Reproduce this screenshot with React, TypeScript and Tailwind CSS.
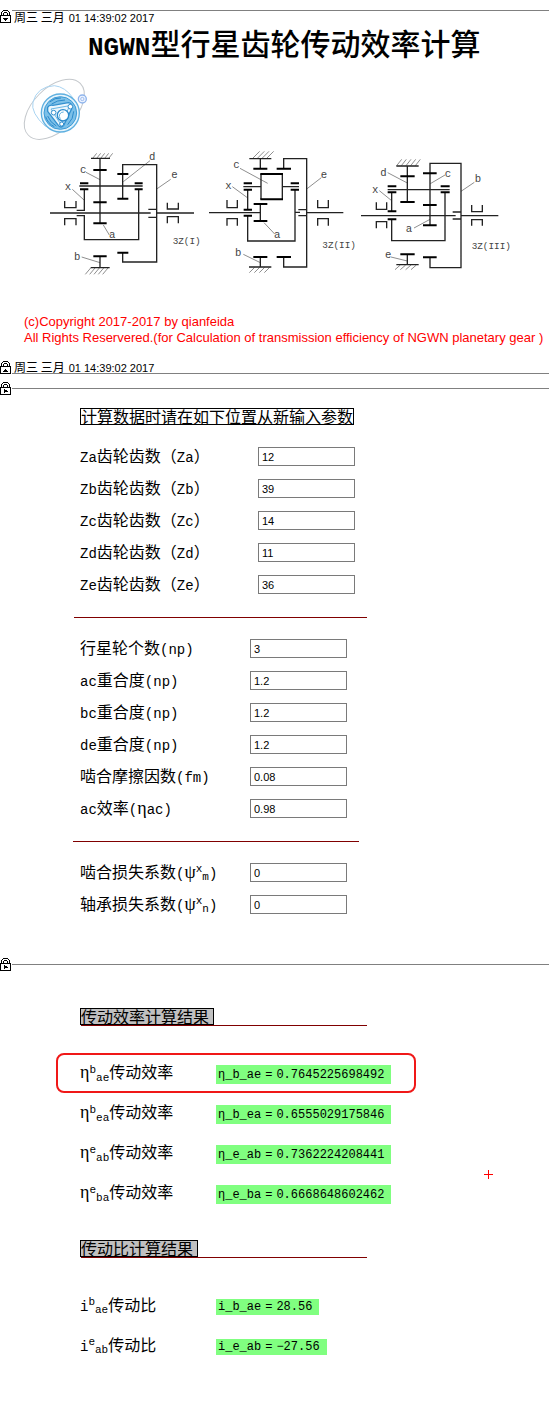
import { useState } from "react"
import type { ReactNode } from "react"

type Field = {
  id: string
  label: ReactNode
  value: string
}

type Result = {
  name: string
  symbol: string
  sup: string
  sub: string
  value: string
}

const CJK = "font-['Noto_Sans_CJK_SC',sans-serif]"
const MONO = "font-['Liberation_Mono','Noto_Sans_CJK_SC',monospace]"
const SANS = "font-['Liberation_Sans','Noto_Sans_CJK_SC',sans-serif]"

// Chinese at 16px, Latin runs in a slightly smaller monospace
function Mixed({ text }: { text: string }) {
  return (
    <>
      {text.split(/([\x20-\x7e]+)/).map((part, i) =>
        i % 2 === 1 ? (
          <span key={i} className={`${MONO} text-[14px]`}>
            {part}
          </span>
        ) : (
          part
        ),
      )}
    </>
  )
}

function Script({ sup, sub }: { sup: string; sub: string }) {
  return (
    <span className={MONO}>
      <sup className="text-[11px]">{sup}</sup>
      <sub className="text-[11px]">{sub}</sub>
    </span>
  )
}

function Greek({ children }: { children: ReactNode }) {
  return (
    <span className="font-['Liberation_Serif',serif] text-[18px]">
      {children}
    </span>
  )
}

const gearFields: Field[] = [
  { id: "za", label: <Mixed text="Za齿轮齿数（Za）" />, value: "12" },
  { id: "zb", label: <Mixed text="Zb齿轮齿数（Zb）" />, value: "39" },
  { id: "zc", label: <Mixed text="Zc齿轮齿数（Zc）" />, value: "14" },
  { id: "zd", label: <Mixed text="Zd齿轮齿数（Zd）" />, value: "11" },
  { id: "ze", label: <Mixed text="Ze齿轮齿数（Ze）" />, value: "36" },
]

const meshFields: Field[] = [
  { id: "np", label: <Mixed text="行星轮个数(np)" />, value: "3" },
  { id: "ac", label: <Mixed text="ac重合度(np)" />, value: "1.2" },
  { id: "bc", label: <Mixed text="bc重合度(np)" />, value: "1.2" },
  { id: "de", label: <Mixed text="de重合度(np)" />, value: "1.2" },
  { id: "fm", label: <Mixed text="啮合摩擦因数(fm)" />, value: "0.08" },
  {
    id: "eta-ac",
    label: (
      <>
        <Mixed text="ac效率(" />
        <Greek>η</Greek>
        <Mixed text="ac)" />
      </>
    ),
    value: "0.98",
  },
]

const lossFields: Field[] = [
  {
    id: "psi-m",
    label: (
      <>
        <Mixed text="啮合损失系数(" />
        <Greek>ψ</Greek>
        <Script sup="x" sub="m" />
        <Mixed text=")" />
      </>
    ),
    value: "0",
  },
  {
    id: "psi-n",
    label: (
      <>
        <Mixed text="轴承损失系数(" />
        <Greek>ψ</Greek>
        <Script sup="x" sub="n" />
        <Mixed text=")" />
      </>
    ),
    value: "0",
  },
]

const efficiencies: Result[] = [
  { name: "η_b_ae", symbol: "η", sup: "b", sub: "ae", value: "0.7645225698492" },
  { name: "η_b_ea", symbol: "η", sup: "b", sub: "ea", value: "0.6555029175846" },
  { name: "η_e_ab", symbol: "η", sup: "e", sub: "ab", value: "0.7362224208441" },
  { name: "η_e_ba", symbol: "η", sup: "e", sub: "ba", value: "0.6668648602462" },
]

const ratios: Result[] = [
  { name: "i_b_ae", symbol: "i", sup: "b", sub: "ae", value: "28.56" },
  { name: "i_e_ab", symbol: "i", sup: "e", sub: "ab", value: "−27.56" },
]

const lockArrows = {
  down: "M3 8h5v1h-1v1h-1v1h-1v-1h-1v-1h-1z",
  up: "M3 11h5v-1h-1v-1h-1v-1h-1v1h-1v1h-1z",
  right: "M4 7h1v1h2v1h1v1h-1v0h-2v1h-1z",
}

function Lock({ arrow }: { arrow: keyof typeof lockArrows }) {
  return (
    <svg
      viewBox="0 0 12 13"
      className="h-[13px] w-3 shrink-0"
      shapeRendering="crispEdges"
    >
      <path
        d="M3 0h5v1h-5zM2 1h1v1h-1zM8 1h1v1h-1zM1 2h1v3h-1zM9 2h1v3h-1zM4 2h3v1h-3zM3 3h1v2h-1zM7 3h1v2h-1z"
        fill="#000"
      />
      <rect x="0.500" y="5.500" width="10" height="7" fill="#fff" stroke="#000" />
      <path d={lockArrows[arrow]} fill="#000" />
    </svg>
  )
}

function DateText() {
  return (
    <time
      dateTime="2017-03-01T14:39:02"
      className={`${SANS} flex items-baseline gap-1 pl-0.5 text-[11px] leading-3 whitespace-pre`}
    >
      <span className={`${CJK} text-[12px]`}>周三 三月</span>
      01 14:39:02 2017
    </time>
  )
}

function Divider() {
  return (
    <div className="flex h-[13px] items-center">
      <Lock arrow="right" />
      <div className="h-px flex-1 bg-[#808080]" />
    </div>
  )
}

function Logo() {
  return (
    <svg viewBox="0 0 240 225" className="h-[75px] w-20" fill="none">
      <ellipse
        cx="118"
        cy="118"
        rx="110"
        ry="64"
        transform="rotate(-45 118 118)"
        stroke="#c4c8cc"
        strokeWidth="3"
      />
      <path
        d="M92 170Q46 128 54 96Q66 50 118 47Q150 50 174 84"
        stroke="#a9d4f2"
        strokeWidth="3"
      />
      <circle cx="136" cy="129" r="57" fill="#e6f4fc" stroke="#5fb0e0" strokeWidth="4" />
      <circle cx="136" cy="129" r="49" fill="#7cc0e8" stroke="#3d9bd6" strokeWidth="3" />
      <path
        d="M98 112Q102 104 114 106L160 98Q174 100 170 116L146 166Q138 176 130 166L98 124Z"
        fill="#eaf6fd"
        stroke="#3390cf"
        strokeWidth="4"
      />
      <path
        d="M108 117L158 108Q163 108 160 116L140 158H134Z"
        stroke="#6ab7e4"
        strokeWidth="3"
      />
      <circle cx="144" cy="136" r="17" fill="#fff" stroke="#2c8acb" strokeWidth="4" />
      <path d="M136 146A12 12 0 0 1 146 126" stroke="#5fb0e0" strokeWidth="3" />
      <circle cx="116" cy="128" r="7" fill="#fff" stroke="#3390cf" strokeWidth="3" />
      <circle cx="166" cy="110" r="7" fill="#fff" stroke="#3390cf" strokeWidth="3" />
      <circle cx="140" cy="162" r="6" fill="#fff" stroke="#3390cf" strokeWidth="3" />
      <path
        d="M104 96Q120 82 138 84M110 102Q126 90 150 90M92 140Q98 160 118 170M98 138Q106 158 124 168M176 124Q176 146 158 164"
        stroke="#2c8acb"
        strokeWidth="3"
      />
      <circle cx="202" cy="87" r="12" fill="#eef4ff" stroke="#8fb4ec" strokeWidth="4" />
      <circle cx="202" cy="87" r="5" stroke="#7aa3e6" strokeWidth="2" />
    </svg>
  )
}

type SchemeProps = {
  className: string
  viewBox: string
  lines: string
  bars: string
  thin: string
  labels: [number, number, string][]
  title: [number, number, string]
}

function Scheme({ className, viewBox, lines, bars, thin, labels, title }: SchemeProps) {
  return (
    <svg viewBox={viewBox} className={`${className} h-32 shrink-0`} fill="none">
      <path d={thin} stroke="#555" strokeWidth="2" />
      <path d={lines} stroke="#222" strokeWidth="4" />
      <path d={bars} stroke="#000" strokeWidth="6" />
      <g className={MONO} fill="#444">
        {labels.map(([x, y, text]) => (
          <text key={text} x={x} y={y} fontSize="32">
            {text}
          </text>
        ))}
        <text x={title[0]} y={title[1]} fontSize="28">
          {title[2]}
        </text>
      </g>
    </svg>
  )
}

const schemes: SchemeProps[] = [
  {
    className: "w-[152px]",
    viewBox: "30 30 456 384",
    lines:
      "M30 219H332M350 219H462M153 55H210M180 55V250M118 138H308M248 176V74H350V366H248V338M325 208H350M325 232H350M110 211H133V148M110 227H133V299H296V148M74 183V203H108V183M74 256V236H108V256M382 188V207H415V188M382 250V230H415V250M180 349V383M152 383H209",
    bars:
      "M160 90H200M160 187H200M160 250H200M120 130H145M120 148H145M284 130H308M284 148H308M232 102H265M232 176H265M160 349H200M232 338H265",
    thin:
      "M158 55L170 40M170 55L182 40M182 55L194 40M194 55L206 40M206 55L218 40M136 403L152 384M149 403L165 384M162 403L178 384M175 403L191 384M188 403L204 384M138 97L180 119M330 62L250 125M350 147L392 118M97 148L132 180M190 255L208 285M125 351L180 368",
    labels: [
      [120, 98, "c"],
      [327, 60, "d"],
      [394, 114, "e"],
      [74, 150, "x"],
      [207, 294, "a"],
      [102, 360, "b"],
    ],
    title: [398, 312, "3Z(I)"],
  },
  {
    className: "w-[147px]",
    viewBox: "24 30 441 384",
    lines:
      "M27 218H181M320 218H430M148 56H214M181 56V86M251 86V56H320V381H251V351M183 101V178M247 101V178M130 140H183M247 140H297M143 149V209M143 227V303H285V149M285 217H300M295 209H320M295 227H320M181 192V243M81 180V203H112V180M81 257V236H112V257M353 180V203H385V180M353 257V236H385V257M181 351V381M147 381H214",
    bars:
      "M160 86H202M230 86H273M181 102H249M181 178H249M131 130H156M131 149H156M272 130H297M272 149H297M131 209H156M131 227H156M161 192H202M161 243H202M160 351H202M230 351H273",
    thin:
      "M159 54L179 34M173 54L193 34M187 54L207 34M201 54L221 34M148 398L164 382M163 398L179 382M178 398L194 382M193 398L209 382M120 85L203 130M97 140L142 173M320 147L364 113M192 248L224 282M130 343L181 368",
    labels: [
      [100, 84, "c"],
      [76, 146, "x"],
      [362, 114, "e"],
      [222, 293, "a"],
      [105, 347, "b"],
    ],
    title: [367, 324, "3Z(II)"],
  },
  {
    className: "w-[150px]",
    viewBox: "18 30 450 384",
    lines:
      "M18 227H302M318 227H430M124 78H191M157 78V186M98 149H284M225 256V70H318V383H225V352M110 157V214M110 238V302H270V157M293 216H318M293 237H318M64 187V208H95V187M64 265V245H95V265M350 195V215H382V195M350 257V239H382V257M157 343V374M124 374H191",
    bars:
      "M136 109H179M136 186H179M98 139H124M98 157H124M257 139H284M257 157H284M204 100H245M204 195H245M204 256H245M204 352H245M98 214H124M98 238H124M136 343H179",
    thin:
      "M125 77L140 58M139 77L154 58M153 77L168 58M167 77L182 58M181 77L196 58M120 389L136 375M136 389L152 375M152 389L168 375M168 389L184 375M98 98L157 129M226 131L270 105M318 154L358 127M73 152L110 182M177 264L225 238M108 351L157 363",
    labels: [
      [76, 108, "d"],
      [269, 110, "c"],
      [359, 126, "b"],
      [51, 159, "x"],
      [152, 277, "a"],
      [90, 354, "e"],
    ],
    title: [350, 328, "3Z(III)"],
  },
]

function FieldGroup({ fields, labelWidth }: { fields: Field[]; labelWidth: string }) {
  const [values, setValues] = useState(() => fields.map((f) => f.value))

  return (
    <div className="flex flex-col gap-[13px] pl-[7px]">
      {fields.map((field, i) => (
        <div key={field.id} className="flex h-[19px] items-center">
          <label
            htmlFor={field.id}
            className={`${labelWidth} shrink-0 leading-[19px] whitespace-nowrap`}
          >
            {field.label}
          </label>
          <input
            id={field.id}
            type="text"
            value={values[i]}
            onChange={(e) =>
              setValues(values.map((v, j) => (j === i ? e.target.value : v)))
            }
            className={`${SANS} h-[19px] w-[97px] border border-[#7a7a7a] bg-white px-[3px] text-[11px]`}
          />
        </div>
      ))}
    </div>
  )
}

function ResultRow({ result, text, height }: { result: Result; text: string; height: string }) {
  return (
    <div className={`${height} flex items-center`}>
      <label
        htmlFor={result.name}
        className="w-[136px] shrink-0 pb-1 leading-4 whitespace-nowrap"
      >
        {result.symbol === "η" ? <Greek>η</Greek> : <Mixed text={result.symbol} />}
        <Script sup={result.sup} sub={result.sub} />
        {text}
      </label>
      <output
        id={result.name}
        className={`${MONO} ${height} flex items-center gap-1 bg-[#80ff80] pr-[7px] pl-0.5 text-[12px]`}
      >
        <span>{result.name}</span>
        <span>=</span>
        <span>{result.value}</span>
      </output>
    </div>
  )
}

function ResultHeading({ children }: { children: ReactNode }) {
  return (
    <div className="flex flex-col items-start">
      <h2 className="h-[17px] border border-black bg-[#c0c0c0] pr-1 leading-[15px]">
        {children}
      </h2>
      <hr className="ml-px w-[286px] border-[#800000]" />
    </div>
  )
}

export default function App() {
  return (
    <main className={`${CJK} min-h-screen bg-white pt-2.5 pb-12 text-[16px] text-black`}>
      <header>
        <div className="flex h-[13px]">
          <Lock arrow="down" />
          <div className="flex-1 border-t border-[#808080]">
            <DateText />
          </div>
        </div>

        <h1 className="h-[42px] pl-[88px] text-[30px] leading-[38px] font-medium whitespace-nowrap">
          <span className={`${MONO} text-[26px] font-bold`}>NGWN</span>
          型行星齿轮传动效率计算
        </h1>

        <div className="h-20 pt-[5px] pl-[15px]">
          <Logo />
        </div>

        <div className="flex gap-1.5 pt-[5px] pl-[50px]">
          {schemes.map((scheme) => (
            <Scheme key={scheme.className} {...scheme} />
          ))}
        </div>

        <p className={`${SANS} mt-9 pl-6 text-[13px] leading-4 whitespace-nowrap text-[#ff0000]`}>
          (c)Copyright 2017-2017 by qianfeida
          <br />
          All Rights Reservered.(for Calculation of transmission efficiency of NGWN planetary gear )
        </p>

        <div className="mt-[15px] flex h-[13px]">
          <Lock arrow="up" />
          <div className="flex-1 border-b border-[#808080]">
            <DateText />
          </div>
        </div>
      </header>

      <div className="mt-2">
        <Divider />
      </div>

      <form className="pt-[13px] pl-[73px]">
        <h2 className="ml-[7px] h-[17px] w-fit border border-black leading-[15px] whitespace-nowrap">
          计算数据时请在如下位置从新输入参数
        </h2>
        <div className="pt-[22px]">
          <FieldGroup fields={gearFields} labelWidth="w-[178px]" />
        </div>
        <hr className="mt-[23px] mb-[21px] ml-px w-[293px] border-[#800000]" />
        <FieldGroup fields={meshFields} labelWidth="w-[170px]" />
        <hr className="mt-[23px] mb-[21px] w-[286px] border-[#800000]" />
        <FieldGroup fields={lossFields} labelWidth="w-[170px]" />
      </form>

      <div className="mt-11">
        <Divider />
      </div>

      <section className="relative pt-[37px] pl-20">
        <ResultHeading>传动效率计算结果</ResultHeading>
        <div className="relative mt-[39px] flex flex-col gap-[21px]">
          {efficiencies.map((result) => (
            <ResultRow key={result.name} result={result} text="传动效率" height="h-[19px]" />
          ))}
          {/* marks the main result */}
          <div className="pointer-events-none absolute -top-3 -left-6 h-10 w-[360px] rounded-lg border-2 border-[#f01818]" />
        </div>
        <svg
          viewBox="0 0 9 9"
          className="absolute top-[199px] left-[484px] size-[9px]"
          shapeRendering="crispEdges"
        >
          <path d="M0 4.500H9M4.500 0V9" stroke="#ff0000" />
        </svg>
      </section>

      <section className="pt-9 pl-20">
        <ResultHeading>传动比计算结果</ResultHeading>
        <div className="mt-[41px] flex flex-col gap-6">
          {ratios.map((result) => (
            <ResultRow key={result.name} result={result} text="传动比" height="h-4" />
          ))}
        </div>
      </section>
    </main>
  )
}
